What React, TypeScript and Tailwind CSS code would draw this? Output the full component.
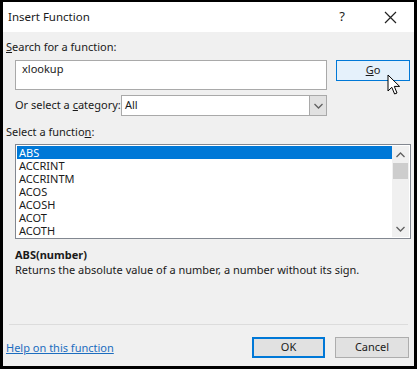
import React from 'react';

const font = { fontFamily: '"Segoe UI", "Noto Sans", sans-serif' };

const functions = ['ABS', 'ACCRINT', 'ACCRINTM', 'ACOS', 'ACOSH', 'ACOT', 'ACOTH'];

function Chevron({ up = false }: { up?: boolean }) {
  return (
    <svg width="9" height="6" viewBox="0 0 9 6" className="block">
      <path d={up ? 'M0.5 5 L4.5 1 L8.5 5' : 'M0.5 1 L4.5 5 L8.5 1'} fill="none" stroke="#606060" strokeWidth="1.3" />
    </svg>
  );
}

export default function App() {
  return (
    <div
      className="w-[417px] h-[369px] bg-black pl-[3px] pt-[2px] pr-[3px] pb-[3px] text-[11px] text-[#1a1a1a] whitespace-nowrap"
      style={font}
    >
      <div className="w-full h-full flex flex-col bg-[#f0f0f0]">
        {/* 标题栏 */}
        <div className="h-[30px] bg-white flex items-center pl-[5px] shrink-0">
          <span className="text-[11.5px] flex-1">Insert Function</span>
          <span className="text-[13px] w-[48px] text-center">?</span>
          <span className="w-[48px] flex justify-center">
            <svg width="13" height="13" viewBox="0 0 13 13">
              <path d="M1 1 L12 12 M12 1 L1 12" stroke="#222" strokeWidth="1.2" />
            </svg>
          </span>
        </div>

        <div className="flex-1 flex flex-col px-[3px]">
          <div className="mt-[7px] h-[16px] leading-[16px]">
            <span className="underline">S</span>earch for a function:
          </div>

          <div className="mt-[5px] flex gap-[9px] pl-[9px]">
            <div className="w-[312px] h-[30px] bg-white border border-[#a9a9a9] px-[6px] pt-[1px] leading-[14px]">
              xlookup
            </div>
            <div className="relative">
              <div className="w-[74px] h-[21px] bg-[#e5f1fb] border border-[#0078d7] flex items-center justify-center">
                <span>
                  <span className="underline">G</span>o
                </span>
              </div>
              <svg className="absolute left-[51px] top-[14px]" width="14" height="22" viewBox="0 0 14 22">
                <path
                  d="M1 1 L1 17 L4.8 13.3 L7.6 20 L10 19 L7.3 12.4 L12.6 12.4 Z"
                  fill="white"
                  stroke="black"
                  strokeWidth="1"
                  strokeLinejoin="round"
                />
              </svg>
            </div>
          </div>

          <div className="mt-[5px] flex items-center pl-[9px] h-[21px]">
            <span className="w-[106px]">
              Or select a <span className="underline">c</span>ategory:
            </span>
            <div className="w-[206px] h-[21px] bg-white border border-[#a9a9a9] flex items-center">
              <span className="flex-1 pl-[3px]">All</span>
              <div className="w-[17px] h-full bg-[#e1e1e1] border-l border-[#a9a9a9] flex items-center justify-center">
                <Chevron />
              </div>
            </div>
          </div>

          <div className="mt-[8px] h-[16px] leading-[16px]">
            Select a functio<span className="underline">n</span>:
          </div>

          <div className="mt-[4px] ml-[9px] w-[396px] h-[95px] bg-white border border-[#828790] flex p-[1px]">
            <div className="flex-1 flex flex-col">
              {functions.map((f, i) => (
                <div
                  key={f}
                  className={
                    i === 0
                      ? 'h-[13px] leading-[13px] px-[2px] bg-[#0078d7] text-white'
                      : 'h-[13px] leading-[13px] px-[2px]'
                  }
                >
                  {f}
                </div>
              ))}
            </div>
            <div className="w-[17px] flex flex-col items-center bg-[#f0f0f0]">
              <div className="h-[17px] flex items-center justify-center">
                <Chevron up />
              </div>
              <div className="w-[15px] h-[16px] bg-[#cdcdcd]" />
              <div className="flex-1" />
              <div className="h-[17px] flex items-center justify-center">
                <Chevron />
              </div>
            </div>
          </div>

          <div className="mt-[8px] ml-[9px] font-bold h-[15px] leading-[15px]">ABS(number)</div>
          <div className="ml-[9px] h-[15px] leading-[15px]">
            Returns the absolute value of a number, a number without its sign.
          </div>

          <div className="flex-1" />
          <div className="mx-[3px] h-px bg-[#dcdcdc]" />

          <div className="h-[41px] flex items-start pt-[12px] pl-0 pr-[2px]">
            <span className="flex-1 leading-[21px] text-[#1c6dbf] underline">Help on this function</span>
            <div className="w-[73px] h-[21px] bg-[#e1e1e1] border-2 border-[#0078d7] flex items-center justify-center">
              OK
            </div>
            <div className="ml-[10px] w-[74px] h-[21px] bg-[#e1e1e1] border border-[#adadad] flex items-center justify-center">
              Cancel
            </div>
          </div>
        </div>
      </div>
    </div>
  );
}
